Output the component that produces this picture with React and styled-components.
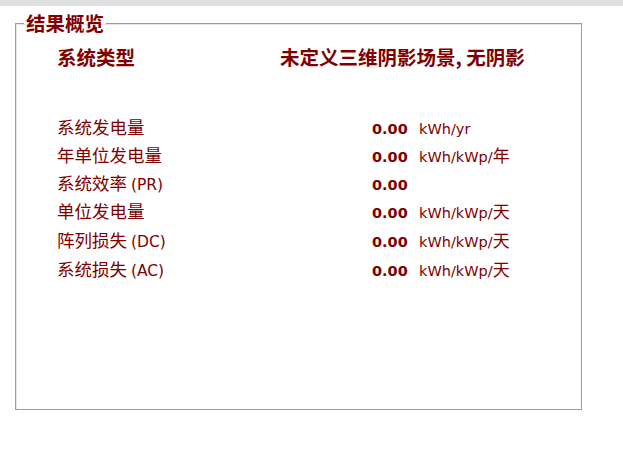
import React from 'react';
import styled, { createGlobalStyle } from 'styled-components';

const GlobalStyle = createGlobalStyle`
  html, body {
    margin: 0;
    padding: 0;
    background: #ffffff;
  }
  body {
    font-family: "Noto Sans CJK SC", "DejaVu Sans", sans-serif;
    color: #800000;
  }
`;

const TopBar = styled.div`
  height: 6px;
  background-color: #e1e1e1;
`;

const Panel = styled.fieldset`
  box-sizing: border-box;
  width: 567px;
  margin: 7px 0 0 15px;
  padding: 0;
  border: 1px solid #9c9c9c;
  box-shadow: inset 1px 1px 0 #e6e6e6;
`;

const Legend = styled.legend`
  margin-left: 8px;
  padding: 0 2px;
  font-size: 19.5px;
  line-height: 20px;
  font-weight: bold;
  color: #800000;
`;

const Body = styled.div`
  height: 376px;
  box-sizing: border-box;
  padding: 12px 0 0 41px;
`;

const HeaderRow = styled.div`
  display: grid;
  grid-template-columns: 223px 1fr;
  font-size: 19.5px;
  line-height: 24px;
  font-weight: bold;
  margin-bottom: 45px;
`;

const Row = styled.div`
  display: grid;
  grid-template-columns: 304px 36px auto;
  column-gap: 11px;
  align-items: baseline;
  height: 28px;
  &:nth-child(4), &:nth-child(5) {
    height: 29px;
  }
`;

const Label = styled.span`
  font-size: 17.5px;
  white-space: nowrap;
`;

const Latin = styled.span`
  font-family: "DejaVu Sans", sans-serif;
  font-size: 15.5px;
`;

const Value = styled.span`
  font-family: "DejaVu Sans", sans-serif;
  font-weight: bold;
  font-size: 14.5px;
`;

const Unit = styled.span`
  font-family: "DejaVu Sans", sans-serif;
  font-size: 14.5px;
  white-space: nowrap;
`;

const UnitCjk = styled.span`
  font-family: "Noto Sans CJK SC", sans-serif;
  font-size: 17px;
`;

const rows = [
  { label: '系统发电量', unit: 'kWh/yr' },
  { label: '年单位发电量', unit: 'kWh/kWp/', cjk: '年' },
  { label: '系统效率 ', tag: '(PR)' },
  { label: '单位发电量', unit: 'kWh/kWp/', cjk: '天' },
  { label: '阵列损失 ', tag: '(DC)', unit: 'kWh/kWp/', cjk: '天' },
  { label: '系统损失 ', tag: '(AC)', unit: 'kWh/kWp/', cjk: '天' },
];

const App = () => (
  <>
    <GlobalStyle />
    <TopBar />
    <Panel>
      <Legend>结果概览</Legend>
      <Body>
        <HeaderRow>
          <span>系统类型</span>
          <span>未定义三维阴影场景, 无阴影</span>
        </HeaderRow>
        <div>
          {rows.map((r, i) => (
            <Row key={i}>
              <Label>
                {r.label}
                {r.tag && <Latin>{r.tag}</Latin>}
              </Label>
              <Value>0.00</Value>
              <Unit>
                {r.unit}
                {r.cjk && <UnitCjk>{r.cjk}</UnitCjk>}
              </Unit>
            </Row>
          ))}
        </div>
      </Body>
    </Panel>
  </>
);

export default App;
